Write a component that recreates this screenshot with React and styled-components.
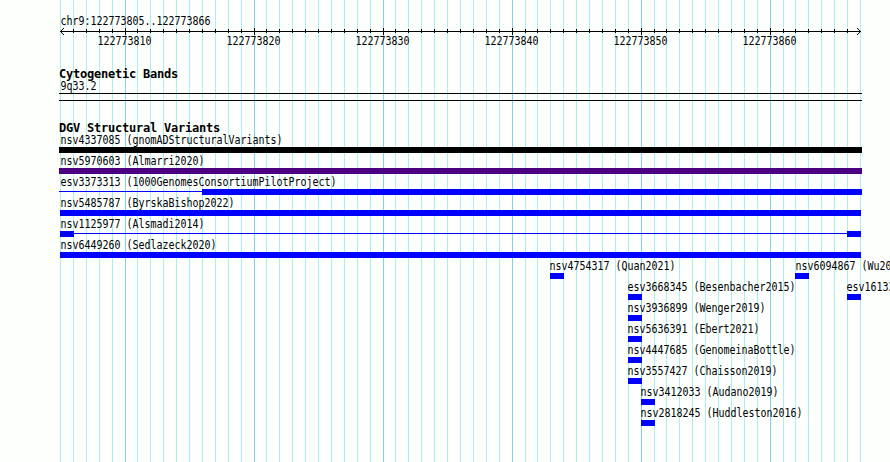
import React from "react";
import styled, { createGlobalStyle } from "styled-components";

const START = 122773805;
const BASES = 62;
const LEFT = 60;
const SCALE = 800 / BASES;

const toX = (offset) => Math.round(LEFT + offset * SCALE);

const GlobalStyle = createGlobalStyle`
  * {
    box-sizing: border-box;
  }
  body {
    margin: 0;
    overflow: hidden;
    background: #fdfffc;
  }
`;

const Browser = styled.main`
  position: relative;
  width: 890px;
  height: 462px;
  overflow: hidden;
  padding-top: 15px;
  color: #000;
  font-family: "DejaVu Sans Mono", monospace;
`;

const Grid = styled.svg`
  position: absolute;
  top: 0;
  left: 0;
  z-index: -1;
  shape-rendering: crispEdges;
`;

/* narrow fixed-width face, 6px for each character */
const Label = styled.div`
  width: max-content;
  height: 13px;
  margin-left: ${(props) => props.$x || 0}px;
  font-size: 12px;
  line-height: 13px;
  white-space: pre;
  transform: translateX(0.4px) scaleX(0.8306);
  transform-origin: 0 0;
`;

const Heading = styled.h2`
  height: 12px;
  margin: 0 0 0 59px;
  font-size: 12px;
  font-weight: bold;
  line-height: 13px;
  letter-spacing: -0.224px;
  white-space: pre;
`;

const Ruler = styled.section`
  height: 53px;
`;

const Axis = styled.svg`
  display: block;
  height: 7px;
  shape-rendering: crispEdges;
`;

const Numbers = styled.div`
  display: grid;
  grid-template-columns: repeat(6, 129px);
  margin-left: 97px;
`;

const Cytoband = styled.section`
  height: 54px;
`;

const Band = styled.div`
  width: 803px;
  height: 8px;
  margin-left: 59px;
  border: solid #000;
  border-width: 1px 0;
`;

const Row = styled.div`
  height: 21px;
`;

const TwoLabels = styled.div`
  display: grid;
  grid-template-columns: ${(props) => props.$split}px 1fr;
  height: 13px;
`;

const Glyphs = styled.svg`
  display: block;
  height: 6px;
  shape-rendering: crispEdges;
`;

const marks = Array.from({ length: BASES + 1 }, (_, i) => ({
  x: toX(i),
  major: (START + i) % 10 === 0,
}));

const numbers = marks
  .map((mark, i) => ({ ...mark, value: START + i }))
  .filter((mark) => mark.major);

// each bar is [left, right], a line is drawn under the bars
const rows = [
  {
    labels: [[60, "nsv4337085 (gnomADStructuralVariants)"]],
    bars: [[59, 862]],
    color: "#000000",
  },
  {
    labels: [[60, "nsv5970603 (Almarri2020)"]],
    bars: [[59, 862]],
    color: "#4b0082",
  },
  {
    labels: [[60, "esv3373313 (1000GenomesConsortiumPilotProject)"]],
    bars: [[202, 862]],
    line: [59, 202],
  },
  { labels: [[60, "nsv5485787 (ByrskaBishop2022)"]], bars: [[60, 861]] },
  {
    labels: [[60, "nsv1125977 (Alsmadi2014)"]],
    bars: [
      [60, 74],
      [847, 861],
    ],
    line: [74, 847],
  },
  { labels: [[60, "nsv6449260 (Sedlazeck2020)"]], bars: [[60, 861]] },
  {
    labels: [
      [549, "nsv4754317 (Quan2021)"],
      [795, "nsv6094867 (Wu2021)"],
    ],
    bars: [
      [550, 564],
      [795, 809],
    ],
  },
  {
    labels: [
      [627, "esv3668345 (Besenbacher2015)"],
      [846, "esv1613370 (Levy2007)"],
    ],
    bars: [
      [628, 642],
      [847, 861],
    ],
  },
  { labels: [[627, "nsv3936899 (Wenger2019)"]], bars: [[628, 642]] },
  { labels: [[627, "nsv5636391 (Ebert2021)"]], bars: [[628, 642]] },
  { labels: [[627, "nsv4447685 (GenomeinaBottle)"]], bars: [[628, 642]] },
  { labels: [[627, "nsv3557427 (Chaisson2019)"]], bars: [[628, 642]] },
  { labels: [[640, "nsv3412033 (Audano2019)"]], bars: [[641, 655]] },
  { labels: [[640, "nsv2818245 (Huddleston2016)"]], bars: [[641, 655]] },
];

const Variant = ({ labels, bars, line, color = "#0000ff" }) => {
  const [first, second] = labels;
  return (
    <Row>
      {second ? (
        <TwoLabels $split={second[0]}>
          <Label $x={first[0]}>{first[1]}</Label>
          <Label>{second[1]}</Label>
        </TwoLabels>
      ) : (
        <Label $x={first[0]}>{first[1]}</Label>
      )}
      <Glyphs width="890" height="6">
        {line && (
          <rect x={line[0]} y="2" width={line[1] - line[0]} height="1" fill={color} />
        )}
        {bars.map(([left, right]) => (
          <rect key={left} x={left} width={right - left} height="6" fill={color} />
        ))}
      </Glyphs>
    </Row>
  );
};

export default () => (
  <>
    <GlobalStyle />
    <Browser>
      <Grid width="890" height="462">
        {marks.map(({ x, major }) => (
          <rect key={x} x={x} width="1" height="462" fill={major ? "#87ceeb" : "#afeeee"} />
        ))}
      </Grid>
      <Ruler>
        <Label $x={60}>chr9:122773805..122773866</Label>
        <Axis width="890" height="7">
          <rect x="60" y="3" width="801" height="1" />
          {marks.slice(1, -1).map(({ x, major }) => (
            <rect key={x} x={x} y={major ? 0 : 1} width="1" height={major ? 7 : 4} />
          ))}
          <path
            d="M63 0h1v1h-1zM62 1h1v1h-1zM61 2h1v1h-1zM61 4h1v1h-1zM62 5h1v1h-1zM63 6h1v1h-1z"
          />
          <path
            d="M857 0h1v1h-1zM858 1h1v1h-1zM859 2h1v1h-1zM859 4h1v1h-1zM858 5h1v1h-1zM857 6h1v1h-1z"
          />
        </Axis>
        <Numbers>
          {numbers.map(({ value }) => (
            <Label key={value}>{value}</Label>
          ))}
        </Numbers>
      </Ruler>
      <Cytoband>
        <Heading>Cytogenetic Bands</Heading>
        <Label $x={60}>9q33.2</Label>
        <Band />
      </Cytoband>
      <section>
        <Heading>DGV Structural Variants</Heading>
        {rows.map((row) => (
          <Variant key={row.labels[0][1]} {...row} />
        ))}
      </section>
    </Browser>
  </>
);
